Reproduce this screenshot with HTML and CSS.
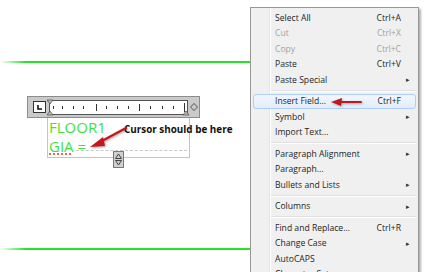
FILE: index.html
```html
<!DOCTYPE html>
<html lang="en">

<head>
    <meta charset="UTF-8">
    <title>MText context menu</title>
    <link rel="stylesheet" href="styles.css">
</head>

<body>

    <div class="drawing">
        <div class="green-line top"></div>
        <div class="green-line bottom"></div>

        <!-- In-place text editor -->
        <div class="editor">
            <div class="toolbar">
                <div class="tab-btn">
                    <svg width="11" height="10" viewBox="0 0 11 10"><path d="M4 3 V7 H8" fill="none" stroke="#111" stroke-width="1.6"/></svg>
                </div>
                <div class="ruler">
                    <svg width="139" height="15" viewBox="0 0 139 15">
                        <g stroke="#333" stroke-width="1">
                            <line x1="4.5" y1="6" x2="4.5" y2="9"/>
                            <line x1="13.5" y1="6" x2="13.5" y2="9"/>
                            <line x1="24.5" y1="6" x2="24.5" y2="9"/>
                            <line x1="34.5" y1="6" x2="34.5" y2="9"/>
                            <line x1="47.5" y1="4" x2="47.5" y2="11"/>
                            <line x1="57.5" y1="6" x2="57.5" y2="9"/>
                            <line x1="68.5" y1="6" x2="68.5" y2="9"/>
                            <line x1="79.5" y1="6" x2="79.5" y2="9"/>
                            <line x1="90.5" y1="4" x2="90.5" y2="11"/>
                            <line x1="101.5" y1="6" x2="101.5" y2="9"/>
                            <line x1="113.5" y1="6" x2="113.5" y2="9"/>
                            <line x1="124.5" y1="6" x2="124.5" y2="9"/>
                            <line x1="135.5" y1="3" x2="135.5" y2="12"/>
                        </g>
                        <g fill="#bbb" stroke="#555" stroke-width="0.8">
                            <path d="M-2 0 H4 L1 4 Z"/>
                            <path d="M-2 15 H4 L1 11 Z"/>
                            <path d="M134 15 H140 L137 11 Z"/>
                        </g>
                    </svg>
                </div>
                <div class="diamond"></div>
            </div>

            <div class="textbox">
                <div class="mtext">FLOOR1</div>
                <div class="mtext"><span class="misspelt">GIA</span> =</div>
            </div>

            <div class="size-btn">
                <svg width="9" height="15" viewBox="0 0 9 15">
                    <path d="M4.5 2 L7.5 6.5 H1.5 Z M4.5 13 L7.5 8.5 H1.5 Z" fill="none" stroke="#444" stroke-width="1"/>
                </svg>
            </div>

            <div class="note">Cursor should be here</div>
        </div>

        <svg class="note-arrow" width="50" height="30" viewBox="0 0 50 30">
            <path d="M40 4 L14 18" stroke="#c4161c" stroke-width="2.4" stroke-linecap="round"/>
            <path d="M4 23 L17 13 L19 22 Z" fill="#c4161c"/>
        </svg>
    </div>

    <!-- Context menu -->
    <div class="menu">
        <div class="item"><span>Select All</span><span class="key">Ctrl+A</span><span></span></div>
        <div class="item disabled"><span>Cut</span><span class="key">Ctrl+X</span><span></span></div>
        <div class="item disabled"><span>Copy</span><span class="key">Ctrl+C</span><span></span></div>
        <div class="item"><span>Paste</span><span class="key">Ctrl+V</span><span></span></div>
        <div class="item"><span>Paste Special</span><span></span><span class="sub">&#9656;</span></div>
        <div class="sep"></div>
        <div class="item active"><span>Insert Field...</span><span class="key">Ctrl+F</span><span></span>
            <svg class="menu-arrow" width="34" height="10" viewBox="0 0 34 10">
                <path d="M10 5 H31" stroke="#c4161c" stroke-width="2" stroke-linecap="round"/>
                <path d="M1 5 L12 1 L11 9 Z" fill="#c4161c"/>
            </svg>
        </div>
        <div class="item"><span>Symbol</span><span></span><span class="sub">&#9656;</span></div>
        <div class="item"><span>Import Text...</span><span></span><span></span></div>
        <div class="sep"></div>
        <div class="item"><span>Paragraph Alignment</span><span></span><span class="sub">&#9656;</span></div>
        <div class="item"><span>Paragraph...</span><span></span><span></span></div>
        <div class="item"><span>Bullets and Lists</span><span></span><span class="sub">&#9656;</span></div>
        <div class="sep"></div>
        <div class="item"><span>Columns</span><span></span><span class="sub">&#9656;</span></div>
        <div class="sep"></div>
        <div class="item"><span>Find and Replace...</span><span class="key">Ctrl+R</span><span></span></div>
        <div class="item"><span>Change Case</span><span></span><span class="sub">&#9656;</span></div>
        <div class="item"><span>AutoCAPS</span><span></span><span></span></div>
        <div class="item"><span>Character Set</span><span></span><span class="sub">&#9656;</span></div>
    </div>

</body>

</html>
```

FILE: styles.css
```css
* {
    margin: 0;
    padding: 0;
    box-sizing: border-box;
}

body {
    font-family: 'Open Sans', 'Liberation Sans', sans-serif;
    background-color: #fff;
    color: #1e1e1e;
    width: 436px;
    height: 272px;
    overflow: hidden;
    position: relative;
}

/* Drawing canvas */
.drawing {
    position: absolute;
    inset: 0;
}

.green-line {
    position: absolute;
    left: 0;
    width: 252px;
    height: 2px;
    background: linear-gradient(to right, rgba(40, 226, 40, 0) 0, #28e228 26px);
}

.green-line.top {
    top: 61px;
}

.green-line.bottom {
    top: 248px;
}

/* Text editor */
.editor {
    position: absolute;
    left: 27px;
    top: 96px;
    width: 173px;
}

.toolbar {
    display: flex;
    align-items: center;
    height: 22px;
    background-color: #cacaca;
    border: 1px solid #8c8c8c;
    padding-left: 5px;
}

.tab-btn {
    width: 13px;
    height: 12px;
    background-color: #fff;
    border: 1px solid #333;
    display: flex;
}

.ruler {
    width: 139px;
    height: 15px;
    margin-left: 3px;
    background-color: #fff;
    border: 1px solid #555;
    display: flex;
    overflow: visible;
}

.ruler svg {
    overflow: visible;
    margin: -1px;
}

.diamond {
    width: 6px;
    height: 6px;
    margin-left: 3px;
    border: 1px solid #777;
    transform: rotate(45deg);
}

.textbox {
    margin-left: 20px;
    width: 143px;
    height: 40px;
    background-color: #fff;
    border: 1px solid #c4c4c4;
    border-top: none;
    padding: 0 0 0 1px;
    position: relative;
}

.textbox::after {
    content: "";
    position: absolute;
    left: 28px;
    right: 2px;
    bottom: 6px;
    border-bottom: 1px dashed #c8c8c8;
}

.mtext {
    font-size: 15px;
    line-height: 18.5px;
    color: #3ee23e;
}

.misspelt {
    text-decoration: underline dotted #e23030;
    text-underline-offset: 2px;
}

.size-btn {
    position: absolute;
    left: 86px;
    top: 55px;
    width: 11px;
    height: 17px;
    background-color: #cfcfcf;
    border: 1px solid #7a7a7a;
    display: flex;
}

.note {
    position: absolute;
    left: 97px;
    top: 26px;
    font-size: 9.9px;
    font-weight: 700;
    color: #111;
    white-space: nowrap;
}

.note-arrow {
    position: absolute;
    left: 86px;
    top: 124px;
    filter: drop-shadow(1px 1px 1px rgba(0, 0, 0, 0.35));
}

/* Context menu */
.menu {
    position: absolute;
    left: 250px;
    top: 7px;
    width: 169px;
    padding: 2px;
    border: 1px solid #979797;
    background: linear-gradient(to right, #f0f0f0 0 18px, #e2e3e3 18px 19px, #fff 19px 20px, #f0f0f0 20px);
    box-shadow: 2px 2px 2px rgba(0, 0, 0, 0.3);
    font-size: 8.6px;
}

.item {
    display: grid;
    grid-template-columns: 1fr auto 14px;
    align-items: center;
    height: 15.5px;
    padding-left: 21px;
    border: 1px solid transparent;
    border-radius: 3px;
    position: relative;
    white-space: nowrap;
}

.item.disabled {
    color: #a2a2a2;
}

.item.active {
    background: linear-gradient(#f2f7fe, #e2ecfa);
    border-color: #aecff7;
}

.sub {
    font-size: 7px;
    text-align: center;
    color: #333;
}

.sep {
    height: 2px;
    margin: 2px 0 2px 18px;
    border-top: 1px solid #e0e0e0;
    border-bottom: 1px solid #fff;
}

.menu-arrow {
    position: absolute;
    left: 76px;
    top: 2px;
    filter: drop-shadow(1px 1px 1px rgba(0, 0, 0, 0.3));
}
```
